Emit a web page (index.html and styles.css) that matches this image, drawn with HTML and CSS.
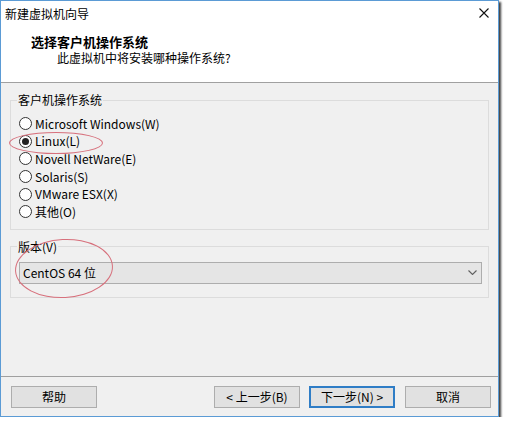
FILE: index.html
```html
<!DOCTYPE html>
<html lang="zh-CN">
<head>
<meta charset="utf-8">
<title>新建虚拟机向导</title>
<link rel="stylesheet" href="styles.css">
</head>
<body>
<div class="window">
  <div class="titlebar">
    <span class="title">新建虚拟机向导</span>
    <svg class="close" width="10" height="10" viewBox="0 0 10 10"><path d="M0.5 0.5 L9.5 9.5 M9.5 0.5 L0.5 9.5" stroke="#111" stroke-width="1.1" fill="none"/></svg>
  </div>
  <div class="header">
    <div class="heading">选择客户机操作系统</div>
    <div class="subheading">此虚拟机中将安装哪种操作系统?</div>
  </div>
  <div class="body">
    <fieldset class="group os-group">
      <legend>客户机操作系统</legend>
      <ul class="radios">
        <li class="radio"><span class="circle"></span>Microsoft Windows(W)</li>
        <li class="radio checked"><span class="circle"></span>Linux(L)</li>
        <li class="radio"><span class="circle"></span>Novell NetWare(E)</li>
        <li class="radio"><span class="circle"></span>Solaris(S)</li>
        <li class="radio"><span class="circle"></span>VMware ESX(X)</li>
        <li class="radio"><span class="circle"></span>其他(O)</li>
      </ul>
    </fieldset>
    <fieldset class="group version-group">
      <legend>版本(V)</legend>
      <div class="select">
        <span class="select-value">CentOS 64 位</span>
        <svg class="chevron" width="9" height="5" viewBox="0 0 9 5"><path d="M0.5 0.5 L4.5 4.5 L8.5 0.5" stroke="#606060" stroke-width="1.1" fill="none"/></svg>
      </div>
    </fieldset>
  </div>
  <div class="footer">
    <button class="btn">帮助</button>
    <div class="spacer"></div>
    <button class="btn">&lt; 上一步(B)</button>
    <button class="btn primary">下一步(N) &gt;</button>
    <button class="btn">取消</button>
  </div>
  <div class="mark mark-linux"></div>
  <div class="mark mark-version"></div>
</div>
</body>
</html>
```

FILE: styles.css
```css
* { box-sizing: border-box; }

html, body {
  margin: 0;
  padding: 0;
  background: #ffffff;
}

body {
  font-family: "Noto Sans CJK SC", "Noto Sans", sans-serif;
  font-size: 12px;
  color: #000;
}

.window {
  position: relative;
  width: 499px;
  height: 417px;
  border: 1px solid #5b9bd5;
  background: #f0f0f0;
  display: flex;
  flex-direction: column;
  box-shadow: 2px 2px 2px rgba(30, 30, 30, 0.85);
}

.titlebar {
  height: 25px;
  background: #fff;
  display: flex;
  align-items: center;
  justify-content: space-between;
  padding: 0 9px 0 4px;
}

.title {
  line-height: 25px;
}

.close {
  display: block;
  margin-top: -1px;
}

.header {
  background: #fff;
  padding: 7px 0 15px 0;
  height: 57px;
  border-bottom: 1px solid #a0a0a0;
}

.heading {
  font-weight: bold;
  font-size: 13px;
  line-height: 17px;
  padding-left: 30px;
}

.subheading {
  line-height: 16px;
  padding-left: 56px;
}

.body {
  flex: 1;
  padding: 9px 9px 0 9px;
  display: flex;
  flex-direction: column;
  gap: 9px;
}

.group {
  margin: 0;
  border: 1px solid #dcdcdc;
  padding: 0 6px 8px 8px;
  min-width: 0;
}

.group legend {
  margin-left: -2px;
  padding: 0 1px;
  line-height: 16px;
}

.radios {
  list-style: none;
  margin: 7px 0 0 0;
  padding: 0;
}

.radio {
  height: 17.6px;
  display: flex;
  align-items: center;
  gap: 3px;
  line-height: 16px;
}

.circle {
  width: 13px;
  height: 13px;
  border: 1px solid #333;
  border-radius: 50%;
  background: #fff;
  display: flex;
  align-items: center;
  justify-content: center;
  flex: none;
}

.radio.checked .circle::after {
  content: "";
  width: 7px;
  height: 7px;
  border-radius: 50%;
  background: #222;
}

.version-group {
  padding-bottom: 13px;
}

.select {
  margin-top: 7px;
  height: 22px;
  background: #e5e5e5;
  border: 1px solid #adadad;
  display: flex;
  align-items: center;
  justify-content: space-between;
  padding: 0 4px 0 3px;
}

.select-value {
  line-height: 18px;
}

.chevron {
  display: block;
}

.footer {
  height: 40px;
  border-top: 1px solid #a0a0a0;
  display: flex;
  align-items: flex-start;
  padding: 9px 7px 0 10px;
  gap: 9px;
}

.spacer {
  flex: 1;
}

.btn {
  width: 86px;
  height: 22px;
  background: #e1e1e1;
  border: 1px solid #adadad;
  font-family: inherit;
  font-size: 12px;
  line-height: 18px;
  color: #000;
  padding: 0;
  margin: 0;
}

.btn.primary {
  border: 2px solid #2f7dc6;
  margin-right: 1px;
}

.mark {
  position: absolute;
  border: 1px solid #d7707c;
  border-radius: 50%;
  pointer-events: none;
}

.mark-linux {
  left: 8px;
  top: 131px;
  width: 94px;
  height: 22px;
}

.mark-version {
  left: 14px;
  top: 238px;
  width: 98px;
  height: 59px;
  transform: rotate(-3deg);
}
```
